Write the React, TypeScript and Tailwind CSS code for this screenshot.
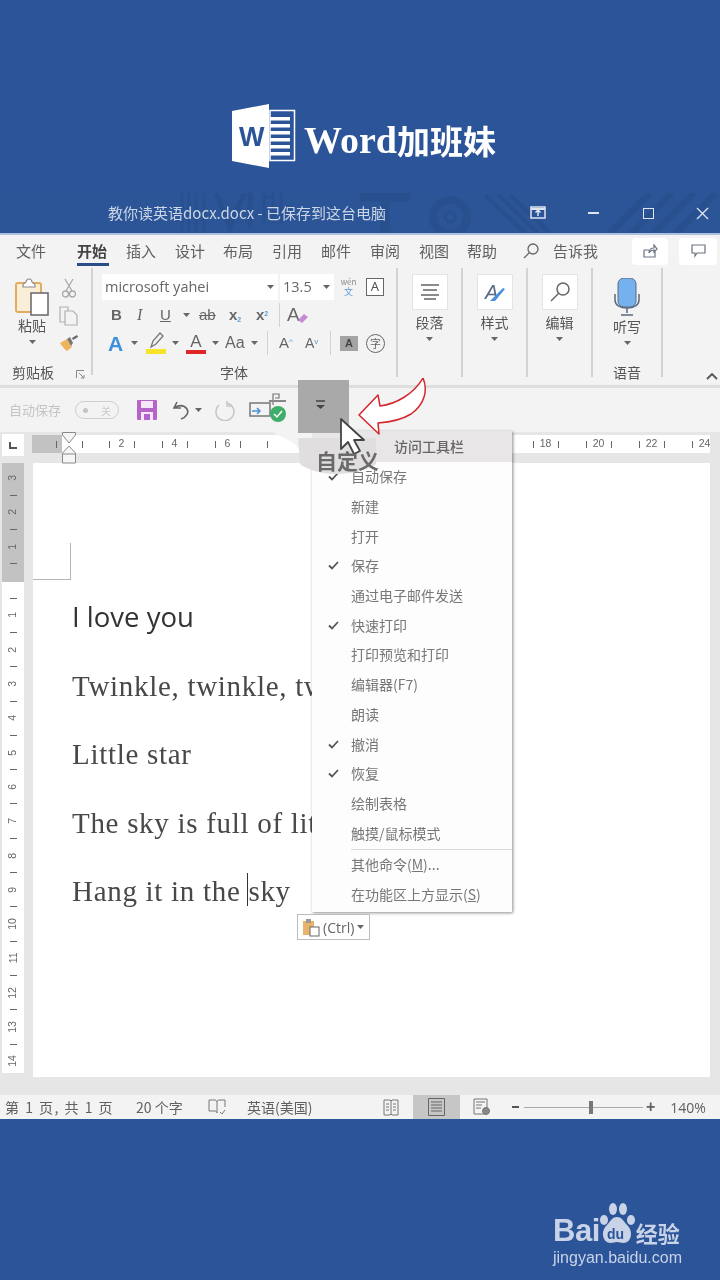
import * as React from "react";

const CJK = "font-['Noto_Sans_CJK_SC','Noto_Sans',sans-serif]";

function Caret({ className = "" }: { className?: string }) {
  return (
    <svg width="7" height="4" viewBox="0 0 7 4" className={className}>
      <path d="M0 0h7L3.500 4z" fill="#666" />
    </svg>
  );
}

function WordLogo() {
  return (
    <svg width="64" height="64" viewBox="0 0 64 64">
      <path d="M0 7 37 0v64L0 57z" fill="#fff" />
      <text x="7" y="42" fontSize="27" fontWeight="700" fill="#2c5499" fontFamily="Liberation Sans">W</text>
      <rect x="38" y="6.500" width="24.500" height="50" fill="none" stroke="#fff" strokeWidth="1.500" />
      {[13, 20, 27, 34, 41, 48].map((y) => (
        <rect key={y} x="38" y={y} width="20" height="3.500" fill="#fff" />
      ))}
    </svg>
  );
}

function TitlePattern() {
  return (
    <svg width="540" height="40" viewBox="0 0 540 40" className="absolute left-[180px] top-0" fill="none" stroke="#28508f">
      <path d="M2 0v40M9 0v40M16 0v40M24 0v40" strokeWidth="3" />
      <path d="M36 0l14 34 14-34M70 0v34" strokeWidth="5" />
      <path d="M84 4h8M84 0v30M93 0v30M101 0v30" strokeWidth="3" />
      <path d="M180 4h50M205 4v36" strokeWidth="9" />
      <circle cx="270" cy="24" r="17" strokeWidth="8" />
      <circle cx="270" cy="24" r="5" strokeWidth="3" />
      <path d="M305 2l40 38M318 2l40 38M330 2l40 38" strokeWidth="4" />
      <path d="M430 40 470 0M452 40 492 0M474 40 514 0M496 40 536 0" strokeWidth="6" />
    </svg>
  );
}

function TitleBar() {
  return (
    <div className="relative flex h-[40px] shrink-0 items-center bg-[#2b5596] text-[#cdd6e6]">
      <TitlePattern />
      <span className={`relative ml-[108px] w-[386px] whitespace-nowrap text-[15px] ${CJK}`}>
        教你读英语docx.docx - 已保存到这台电脑
      </span>
      <div className="relative flex items-center">
        <svg width="16" height="14" viewBox="0 0 16 14" className="ml-[36px]" fill="none" stroke="#dfe5f0">
          <rect x="1" y="1" width="14" height="11" strokeWidth="1.500" />
          <path d="M8 10V4M5.500 6.500 8 4l2.500 2.500" strokeWidth="1.500" />
          <path d="M1 3h14" strokeWidth="2" />
        </svg>
        <span className="ml-[42px] h-[1.500px] w-[11px] bg-[#dfe5f0]" />
        <span className="ml-[44px] h-[11px] w-[11px] border-[1.500px] border-[#dfe5f0]" />
        <svg width="13" height="13" viewBox="0 0 13 13" className="ml-[42px]" stroke="#dfe5f0" strokeWidth="1.300">
          <path d="M1 1l11 11M12 1 1 12" />
        </svg>
      </div>
    </div>
  );
}

function TabsRow() {
  const tabs: [string, string][] = [
    ["文件", "w-[61px]"],
    ["开始", "w-[49px]"],
    ["插入", "w-[49px]"],
    ["设计", "w-[48px]"],
    ["布局", "w-[49px]"],
    ["引用", "w-[49px]"],
    ["邮件", "w-[49px]"],
    ["审阅", "w-[49px]"],
    ["视图", "w-[48px]"],
    ["帮助", "w-[55px]"],
  ];
  return (
    <div className={`flex h-[32px] shrink-0 items-center pl-[16px] text-[15px] text-[#606060] ${CJK}`}>
      {tabs.map(([t, w]) => (
        <div key={t} className={`relative ${w}`}>
          {t === "开始" ? (
            <>
              <span className="font-bold text-[#444]">{t}</span>
              <span className="absolute left-0 top-[23px] h-[3px] w-[32px] bg-[#2b4d87]" />
            </>
          ) : (
            t
          )}
        </div>
      ))}
      <svg width="18" height="18" viewBox="0 0 18 18" fill="none" stroke="#666" strokeWidth="1.300">
        <circle cx="11" cy="7" r="5" />
        <path d="M7.500 10.500 2 16" />
      </svg>
      <span className="ml-[13px] w-[79px]">告诉我</span>
      <div className="flex h-[27px] w-[36px] items-center justify-center rounded-sm bg-white">
        <svg width="16" height="16" viewBox="0 0 16 16" fill="none" stroke="#6b7380" strokeWidth="1.200">
          <path d="M2 7h5M2 7v7h11V8M7 10c0-3 2-5 5-5V2l3 4-3 3V7c-2 0-4 1-5 3z" />
        </svg>
      </div>
      <div className="ml-[11px] flex h-[27px] w-[38px] items-center justify-center rounded-sm bg-white">
        <svg width="15" height="14" viewBox="0 0 15 14" fill="none" stroke="#6b7380" strokeWidth="1.200">
          <path d="M1 1h13v8H6l-2 3V9H1z" />
        </svg>
      </div>
    </div>
  );
}

function Sep({ className = "" }: { className?: string }) {
  return <span className={`shrink-0 bg-[#d2d2d2] ${className}`} />;
}

function Clipboard() {
  return (
    <div className="relative flex w-[92px] shrink-0 flex-col">
      <div className="flex pl-[15px] pt-[11px]">
        <div className="flex w-[34px] flex-col items-center">
          <svg width="36" height="38" viewBox="0 0 36 38" fill="none">
            <rect x="2" y="5" width="25" height="29" rx="2" fill="#fbeed8" stroke="#e3ad5c" strokeWidth="2" />
            <path d="M9 7c0-2 3-2 3-3s1-3 3-3 3 2 3 3 3 1 3 3v2H9z" fill="#fff" stroke="#8a8a8a" strokeWidth="1.200" />
            <rect x="17" y="15" width="17" height="22" fill="#fff" stroke="#666" strokeWidth="1.500" />
          </svg>
          <span className={`-mt-[1px] whitespace-nowrap text-[14px] leading-[20px] text-[#555] ${CJK}`}>粘贴</span>
          <Caret className="mt-[5px]" />
        </div>
        <div className="ml-[10px] flex w-[20px] flex-col items-center gap-[8px]">
          <svg width="14" height="20" viewBox="0 0 14 20" fill="none" stroke="#a8a8a8" strokeWidth="1.300">
            <path d="M3 1l7 12M11 1 4 13" />
            <circle cx="3.500" cy="16" r="3" />
            <circle cx="10.500" cy="16" r="3" />
          </svg>
          <svg width="20" height="20" viewBox="0 0 20 20" fill="none" stroke="#b0b0b0" strokeWidth="1.200">
            <path d="M1 1h8v15H1z" />
            <path d="M6 5h8l4 4v10H6z" fill="#f3f3f3" />
          </svg>
          <svg width="20" height="18" viewBox="0 0 20 18">
            <path d="M1 9l7-4 5 8-5 4c-2-1-5-5-7-8z" fill="#efb35e" />
            <path d="M8 5l3-2 3 6-2 3z" fill="#777" />
            <path d="M13 4l5-3 1 2-5 3z" fill="#666" />
          </svg>
        </div>
      </div>
      <div className="absolute left-[12px] top-[95px] flex items-center">
        <span className={`text-[14px] leading-[20px] text-[#555] ${CJK}`}>剪贴板</span>
        <svg width="9" height="9" viewBox="0 0 9 9" className="ml-[22px] mt-[5px]" fill="none" stroke="#888">
          <path d="M.5 8V.5H8M3 3l5 5M8 5v3H5" />
        </svg>
      </div>
    </div>
  );
}

function FontGroup() {
  return (
    <div className="relative flex w-[304px] shrink-0 flex-col pl-[9px] pt-[7px]">
      <div className="flex items-center">
        <div className="flex h-[26px] w-[176px] items-center justify-between bg-white pl-[3px] pr-[4px] font-['Open_Sans',sans-serif] text-[14.500px] text-[#666]">
          microsoft yahei
          <Caret />
        </div>
        <div className="ml-[2px] flex h-[26px] w-[54px] items-center justify-between bg-white pl-[3px] pr-[4px] font-['Open_Sans',sans-serif] text-[14.500px] text-[#666]">
          13.5
          <Caret />
        </div>
        <div className={`ml-[5px] flex w-[19px] flex-col items-center text-[9px] leading-[10px] text-[#5a9bd5] ${CJK}`}>
          <span className="text-[8px] text-[#888]">wén</span>
          文
        </div>
        <div className="ml-[8px] flex h-[18px] w-[18px] items-center justify-center border border-[#666] bg-white text-[13px] text-[#555]">A</div>
      </div>
      <div className="mt-[2px] flex h-[26px] items-center pl-[9px] font-['Liberation_Sans',sans-serif] text-[#666]">
        <span className="w-[26px] text-[15px] font-bold">B</span>
        <span className="w-[23px] font-['Liberation_Serif',serif] text-[16px] italic">I</span>
        <span className="w-[23px] text-[15px] underline">U</span>
        <Caret />
        <span className="ml-[9px] w-[30px] text-[15px] line-through">ab</span>
        <span className="w-[27px] text-[15px] font-bold">x<sub className="text-[7px] text-[#5a9bd5]">2</sub></span>
        <span className="w-[23px] text-[15px] font-bold">x<sup className="text-[7px] text-[#5a9bd5]">2</sup></span>
        <Sep className="h-[24px] w-[1px]" />
        <svg width="22" height="22" viewBox="0 0 22 22" className="ml-[7px]">
          <text x="0" y="17" fontSize="19" fontFamily="Liberation Sans" fill="#666">A</text>
          <path d="M11 16l6-6 4 3-6 6z" fill="#c58ad6" />
        </svg>
      </div>
      <div className="mt-[1px] flex h-[28px] items-center pl-[6px] font-['Liberation_Sans',sans-serif] text-[#666]">
        <span className="w-[20px] text-[21px] font-bold leading-none text-[#3f8fdc]">A</span>
        <Caret className="ml-[3px]" />
        <div className="ml-[7px] flex w-[22px] flex-col items-center">
          <svg width="18" height="17" viewBox="0 0 18 17" fill="none" stroke="#777" strokeWidth="1.300">
            <path d="M4 15 6 9l7-8 3 3-7 8z" />
          </svg>
          <span className="h-[5px] w-[20px] bg-[#f7e328]" />
        </div>
        <Caret className="ml-[5px]" />
        <div className="ml-[6px] flex w-[22px] flex-col items-center">
          <span className="h-[17px] text-[17px] leading-[17px]">A</span>
          <span className="h-[4px] w-[20px] bg-[#e0242a]" />
        </div>
        <Caret className="ml-[5px]" />
        <span className="ml-[6px] w-[26px] text-[16px]">Aa</span>
        <Caret />
        <Sep className="ml-[9px] h-[24px] w-[1px]" />
        <span className="ml-[11px] w-[26px] text-[15px]">A<sup className="text-[8px] text-[#5a9bd5]">^</sup></span>
        <span className="w-[19px] text-[14px]">A<sup className="text-[8px] text-[#5a9bd5]">v</sup></span>
        <Sep className="ml-[6px] h-[24px] w-[1px]" />
        <span className="ml-[9px] flex h-[15px] w-[18px] items-center justify-center bg-[#a4a4a4] text-[11px] font-bold text-[#444]">A</span>
        <span className={`ml-[8px] flex h-[19px] w-[19px] items-center justify-center rounded-full border border-[#666] text-[11px] ${CJK}`}>字</span>
      </div>
      <span className={`absolute left-[127px] top-[95px] text-[14px] leading-[20px] text-[#555] ${CJK}`}>字体</span>
    </div>
  );
}

function BigButton({ label, w, children }: { label: string; w: string; children: React.ReactNode }) {
  return (
    <div className={`flex shrink-0 flex-col items-center pt-[7px] ${w}`}>
      <div className="flex h-[36px] w-[36px] items-center justify-center border border-[#e4e4e4] bg-white">{children}</div>
      <span className={`mt-[2px] text-[14px] leading-[20px] text-[#555] ${CJK}`}>{label}</span>
      <Caret className="mt-[5px]" />
    </div>
  );
}

function Ribbon() {
  return (
    <div className="relative flex h-[121px] shrink-0 border-b-[3px] border-[#dedede]">
      <Clipboard />
      <Sep className="-ml-[1px] mb-[10px] mt-[1px] w-[2px]" />
      <FontGroup />
      <Sep className="-ml-[1px] mb-[8px] mt-[1px] w-[2px]" />
      <BigButton label="段落" w="w-[63px]">
        <svg width="20" height="18" viewBox="0 0 20 18" stroke="#666" strokeWidth="1.300">
          <path d="M1 2h18M3 7h14M1 12h18M4 16h12" />
        </svg>
      </BigButton>
      <Sep className="mb-[8px] mt-[1px] w-[2px]" />
      <BigButton label="样式" w="w-[63px]">
        <svg width="22" height="22" viewBox="0 0 22 22">
          <text x="1" y="18" fontSize="20" fontStyle="italic" fontFamily="Liberation Sans" fill="#5a6a80">A</text>
          <path d="M6 20 19 7l2 1-10 12z" fill="#4a90d9" />
        </svg>
      </BigButton>
      <Sep className="mb-[8px] mt-[1px] w-[2px]" />
      <BigButton label="编辑" w="w-[63px]">
        <svg width="22" height="22" viewBox="0 0 22 22" fill="none" stroke="#666" strokeWidth="1.500">
          <circle cx="14" cy="8" r="6" />
          <path d="M9.500 12.500 2 20" />
        </svg>
      </BigButton>
      <Sep className="mb-[8px] mt-[1px] w-[2px]" />
      <div className="relative flex w-[68px] shrink-0 flex-col items-center pt-[11px]">
        <svg width="26" height="38" viewBox="0 0 26 38">
          <rect x="4" y="0" width="18" height="29" rx="6" fill="#74b1ee" stroke="#5a6a80" />
          <path d="M1 16v6c0 5 5 8 12 8s12-3 12-8v-6M13 30v5M7 37h12" fill="none" stroke="#5a6a80" strokeWidth="1.500" />
        </svg>
        <span className={`text-[14px] leading-[20px] text-[#555] ${CJK}`}>听写</span>
        <Caret className="mt-[5px]" />
        <span className={`absolute top-[95px] text-[14px] leading-[20px] text-[#555] ${CJK}`}>语音</span>
      </div>
      <Sep className="mb-[8px] mt-[1px] w-[2px]" />
      <svg width="12" height="7" viewBox="0 0 12 7" className="absolute right-[2px] top-[106px]" fill="none" stroke="#555" strokeWidth="1.800">
        <path d="M1 6l5-5 5 5" />
      </svg>
    </div>
  );
}

function QuickAccess() {
  return (
    <div className="flex h-[44px] shrink-0 items-center pl-[9px]">
      <span className={`w-[66px] text-[13px] text-[#c4c4c4] ${CJK}`}>自动保存</span>
      <div className={`flex h-[18px] w-[44px] items-center justify-between rounded-full border border-[#cfcfcf] px-[7px] text-[10px] text-[#ccc] ${CJK}`}>
        <span className="h-[5px] w-[5px] rounded-full bg-[#c4c4c4]" />关
      </div>
      <svg width="20" height="20" viewBox="0 0 20 20" className="ml-[18px]">
        <rect width="20" height="20" rx="1" fill="#b565c9" />
        <rect x="4" y="1" width="12" height="7" fill="#f6e8f9" />
        <rect x="4" y="12" width="12" height="8" fill="#f6e8f9" />
        <rect x="7" y="14" width="6" height="6" fill="#b565c9" />
      </svg>
      <svg width="20" height="20" viewBox="0 0 20 20" className="ml-[15px]" fill="none" stroke="#666" strokeWidth="1.600">
        <path d="M5 2 2 8h7M2 8c5-3 10-3 13 1 2 3 0 8-6 10" />
      </svg>
      <Caret className="ml-[3px]" />
      <svg width="21" height="21" viewBox="0 0 21 21" className="ml-[12px]" fill="none" stroke="#c6c6c6" strokeWidth="1.500">
        <path d="M13 3A9 9 0 1 1 5 5M13 1v5h5" />
      </svg>
      <svg width="38" height="36" viewBox="0 0 38 36" className="ml-[14px]" fill="none">
        <rect x="1" y="11" width="20" height="13" stroke="#777" strokeWidth="1.500" />
        <path d="M3 19h8M8 16l3 3-3 3" stroke="#4a90d9" strokeWidth="1.500" />
        <path d="M24 13V2h6v4h-4" stroke="#777" strokeWidth="1.200" />
        <rect x="20" y="8" width="17" height="2" fill="#888" />
        <circle cx="29" cy="22" r="8" fill="#3fae6b" />
        <path d="M25 22l3 3 5-6" stroke="#fff" strokeWidth="1.500" />
      </svg>
    </div>
  );
}

function HorizontalRuler() {
  // 8 to 16 sit behind the callout and the menu
  const left = [2, 4, 6];
  const right = [18, 20, 22, 24];
  const cell = (n: number) => (
    <div key={n} className="flex w-[53px] shrink-0 items-center justify-center gap-[5px]">
      <span className="h-[7px] w-[1px] bg-[#666]" />
      <span className="w-[14px] text-center">{n}</span>
      <span className="h-[7px] w-[1px] bg-[#666]" />
    </div>
  );
  return (
    <div className="relative flex h-[31px] shrink-0 items-start bg-[#e6e6e6]">
      <div className="ml-[2px] mt-[2px] flex h-[22px] w-[22px] items-center justify-center bg-white">
        <span className="h-[7px] w-[8px] border-b-2 border-l-2 border-[#555]" />
      </div>
      <div className="ml-[8px] mt-[3px] flex h-[18px] w-[678px] items-center overflow-hidden bg-white font-['Liberation_Sans',sans-serif] text-[10.500px] text-[#666]">
        <div className="flex h-full w-[30px] shrink-0 items-center justify-end bg-[#c2c2c2] pr-[5px]">
          <span className="h-[7px] w-[1px] bg-[#666]" />
        </div>
        <span className="ml-[20px] h-[7px] w-[1px] shrink-0 bg-[#666]" />
        <div className="ml-[12px] flex">
          {left.map(cell)}
          <div className="flex w-[265px] shrink-0 items-center pl-[13px]">
            <span className="h-[7px] w-[1px] bg-[#666]" />
          </div>
          {right.map(cell)}
        </div>
      </div>
      {/* indent markers */}
      <svg width="14" height="32" viewBox="0 0 14 32" className="absolute left-[62px] top-0" fill="#f6f6f6" stroke="#8a8a8a">
        <path d="M.5.500h13V3L7 11 .5 3z" />
        <path d="M7 14l6.500 7v10H.5V21z" />
        <path d="M.5 22h13" />
      </svg>
    </div>
  );
}

function VerticalRuler() {
  const marks: (number | null | "")[] = [3, null, 2, null, 1, null, "", null];
  for (let i = 1; i <= 14; i++) marks.push(i, null);
  return (
    <div className="relative ml-[2px] mr-[9px] h-[610px] w-[22px] shrink-0 overflow-hidden bg-white font-['Liberation_Sans',sans-serif] text-[10.500px] text-[#666]">
      <div className="h-[119px] bg-[#c2c2c2]" />
      <div className="absolute left-0 top-[6.400px] flex w-full flex-col items-center">
        {marks.map((m, i) => (
          <div key={i} className="flex h-[17.170px] items-center justify-center">
            {m === null ? <span className="h-[1px] w-[7px] bg-[#666]" /> : <span className="-rotate-90">{m}</span>}
          </div>
        ))}
      </div>
    </div>
  );
}

function DocPage() {
  const lines = ["Twinkle, twinkle, tw", "Little star", "The sky is full of lit"];
  const serif = "h-[68.500px] whitespace-nowrap font-['Liberation_Serif',serif] text-[29px] leading-[38px] tracking-[0.700px] text-[#484848]";
  return (
    <div className="h-[614px] w-[677px] shrink-0 overflow-hidden bg-white">
      <div className="ml-0 mt-[80px] h-[37px] w-[38px] border-b border-r border-[#b5b5b5]" />
      <div className="pl-[39px] pt-[18px]">
        <p className="h-[68.500px] font-['Open_Sans',sans-serif] text-[27.500px] leading-[38px] text-[#333]">I love you</p>
        {lines.map((l) => (
          <p key={l} className={serif}>
            {l}
          </p>
        ))}
        <p className={serif}>
          Hang it in the{" "}
          <span className="relative">
            <span className="absolute -left-[1px] -top-[2px] h-[33px] w-[1px] bg-[#333]" />
          </span>
          sky
        </p>
      </div>
    </div>
  );
}

function StatusBar() {
  return (
    <div className={`flex h-[24px] shrink-0 items-center bg-[#f3f3f3] pl-[5px] text-[14px] text-[#606060] ${CJK}`}>
      <span className="w-[131px] whitespace-nowrap tracking-[1.500px]">第 1 页, 共 1 页</span>
      <span className="w-[72px]">20 个字</span>
      <svg width="18" height="16" viewBox="0 0 18 16" fill="none" stroke="#777">
        <path d="M1 1h6c1 0 2 1 2 2v11c0-1-1-2-2-2H1zM9 3c0-1 1-2 2-2h6v7M12 13l2 2 3-4" />
      </svg>
      <span className="ml-[21px] w-[136px]">英语(美国)</span>
      <svg width="16" height="17" viewBox="0 0 16 17" fill="none" stroke="#777">
        <path d="M1 1h6l1 1 1-1h6v15H9l-1-1-1 1H1zM8 2v13M3 5h3M3 8h3M3 11h3M10 5h3M10 8h3M10 11h3" />
      </svg>
      <div className="ml-[14px] flex h-full w-[47px] items-center justify-center bg-[#c6c6c6]">
        <svg width="17" height="18" viewBox="0 0 17 18" fill="none" stroke="#666">
          <path d="M.5.500h16v17H.5zM3 4h11M3 7h11M3 10h11M3 13h11" />
        </svg>
      </div>
      <svg width="17" height="18" viewBox="0 0 17 18" className="ml-[13px]" fill="none" stroke="#777">
        <path d="M1 1h13v15H1zM3 4h9M3 7h6M3 10h5" />
        <circle cx="13" cy="13" r="3.500" fill="#888" />
      </svg>
      <span className="ml-[22px] h-[2px] w-[7px] bg-[#555]" />
      <div className="relative ml-[5px] h-[1px] w-[119px] bg-[#aaa]">
        <span className="absolute left-[65px] -top-[6px] h-[13px] w-[4px] bg-[#777]" />
      </div>
      <span className="ml-[3px] font-['Liberation_Sans',sans-serif] text-[16px] font-bold leading-none">+</span>
      <span className="ml-[15px] font-['Open_Sans',sans-serif] text-[14px]">140%</span>
    </div>
  );
}

const menuItems: [string, boolean][] = [
  ["新建", false],
  ["打开", false],
  ["保存", true],
  ["通过电子邮件发送", false],
  ["快速打印", true],
  ["打印预览和打印", false],
  ["编辑器(F7)", false],
  ["朗读", false],
  ["撤消", true],
  ["恢复", true],
  ["绘制表格", false],
  ["触摸/鼠标模式", false],
];

function MenuRow({ label, check }: { label: React.ReactNode; check?: boolean }) {
  return (
    <div className="flex h-[29.700px] items-center">
      <div className="flex w-[39px] justify-center pl-[4px]">
        {check && (
          <svg width="11" height="9" viewBox="0 0 11 9" fill="none" stroke="#555" strokeWidth="1.800">
            <path d="M1 4.500 4 7.500 10 1" />
          </svg>
        )}
      </div>
      {label}
    </div>
  );
}

function QuickMenu() {
  return (
    <div className={`absolute left-[312px] top-[431px] z-10 h-[481px] w-[200px] bg-[#fdfdfd] text-[14px] text-[#777] shadow-[1px_1px_3px_rgba(0,0,0,0.45)] ${CJK}`}>
      <div className="flex h-[31px] items-center bg-[#e8e6e6] pl-[82px] font-medium text-[#666]">访问工具栏</div>
      <MenuRow label="自动保存" check />
      {menuItems.map(([label, check]) => (
        <MenuRow key={label} label={label} check={check} />
      ))}
      <div className="ml-[39px] mt-[1px] h-[1px] bg-[#dcdcdc]" />
      <MenuRow
        label={
          <span>
            其他命令(<span className="underline">M</span>)...
          </span>
        }
      />
      <MenuRow
        label={
          <span>
            在功能区上方显示(<span className="underline">S</span>)
          </span>
        }
      />
    </div>
  );
}

function PasteTag() {
  return (
    <div className="absolute left-[297px] top-[914px] z-10 flex h-[26px] w-[73px] items-center border border-[#bdbdbd] bg-white pl-[4px] font-['Open_Sans',sans-serif] text-[14px] text-[#666]">
      <svg width="19" height="19" viewBox="0 0 19 19">
        <rect x="1" y="3" width="11" height="14" fill="#e8b46c" />
        <rect x="4" y="1" width="5" height="4" fill="#999" />
        <rect x="8" y="9" width="9" height="9" fill="#fff" stroke="#666" />
      </svg>
      <span className="ml-[2px]">(Ctrl)</span>
      <Caret className="ml-[3px]" />
    </div>
  );
}

// the callout around the customise button: gray button, lens, cursor and red arrow
function Callout() {
  return (
    <>
      <svg width="260" height="110" viewBox="0 0 260 110" className="absolute left-[260px] top-[378px] z-20">
        <path d="M12 54h40v33l-18-22z" fill="#f3f3f3" />
        <path d="M40 86 38 60h78v26c-8 6-24 10-40 10-14 0-28-4-36-10z" fill="#e0dede" />
        <rect x="38" y="2" width="51" height="53" fill="#a9a9a9" />
        <path d="M56 23h9" stroke="#444" strokeWidth="1.500" />
        <path d="M56 27h9l-4.500 4z" fill="#444" />
        <path d="M81 41v30l7-7 6 12 6-3-6-11h10z" fill="#fff" stroke="#444" strokeWidth="1.800" strokeLinejoin="round" />
        <path d="M99 37 118 17l2 11c16-2 34-12 43-28 5 12 2 26-12 36-8 5-20 8-33 9l1 11z" fill="#fff" stroke="#d4262c" strokeWidth="1.500" strokeLinejoin="round" />
      </svg>
      <span className={`absolute left-[316px] top-[450px] z-20 text-[21px] font-bold leading-[20px] text-[#6a6a6a] ${CJK}`}>自定义</span>
    </>
  );
}

function BaiduMark() {
  return (
    <div className="absolute left-[553px] top-[1203px] flex w-[130px] flex-col text-[#c8d3e8]">
      <div className="flex items-end">
        <span className="font-['Liberation_Sans',sans-serif] text-[31px] font-bold leading-[30px] tracking-[-0.500px]">Bai</span>
        <svg width="38" height="42" viewBox="0 0 38 42" className="-ml-[2px] mb-[1px]" fill="#c8d3e8">
          <ellipse cx="6" cy="17" rx="4" ry="5" />
          <ellipse cx="15" cy="6" rx="4" ry="6" />
          <ellipse cx="25" cy="6" rx="4" ry="6" />
          <ellipse cx="33" cy="17" rx="4" ry="5" />
          <path d="M19 14c-5 0-7 5-11 9-5 5-4 16 4 17 3 0 5-1 7-1s4 1 7 1c8-1 9-12 4-17-4-4-6-9-11-9z" />
          <text x="9" y="36" fontSize="14" fontWeight="700" fontFamily="Liberation Sans" fill="#2c5499">du</text>
        </svg>
        <span className={`mb-[1px] text-[22px] font-bold leading-[26px] ${CJK}`}>经验</span>
      </div>
      <span className="mt-[3px] whitespace-nowrap font-['Liberation_Sans',sans-serif] text-[16px] leading-[18px]">jingyan.baidu.com</span>
    </div>
  );
}

export default function App() {
  return (
    <div className="relative flex h-[1280px] w-[720px] flex-col overflow-hidden bg-[#2c5499] blur-[0.5px]">
      <div className="flex h-[193px] shrink-0 items-end pb-[25px] pl-[232px]">
        <WordLogo />
        <div className="mb-[6px] ml-[8px] flex items-center whitespace-nowrap font-bold text-white">
          <span className="font-['Liberation_Serif',serif] text-[38px] leading-[44px]">Word</span>
          <span className={`text-[33px] leading-[44px] ${CJK}`}>加班妹</span>
        </div>
      </div>
      <TitleBar />
      <div className="flex h-[199px] shrink-0 flex-col border-t-[2px] border-[#a9c0e0] bg-[#f3f3f3]">
        <TabsRow />
        <Ribbon />
        <QuickAccess />
      </div>
      <div className="flex h-[663px] shrink-0 flex-col bg-[#e6e6e6]">
        <HorizontalRuler />
        <div className="flex">
          <VerticalRuler />
          <DocPage />
        </div>
      </div>
      <StatusBar />
      <QuickMenu />
      <PasteTag />
      <Callout />
      <BaiduMark />
    </div>
  );
}
